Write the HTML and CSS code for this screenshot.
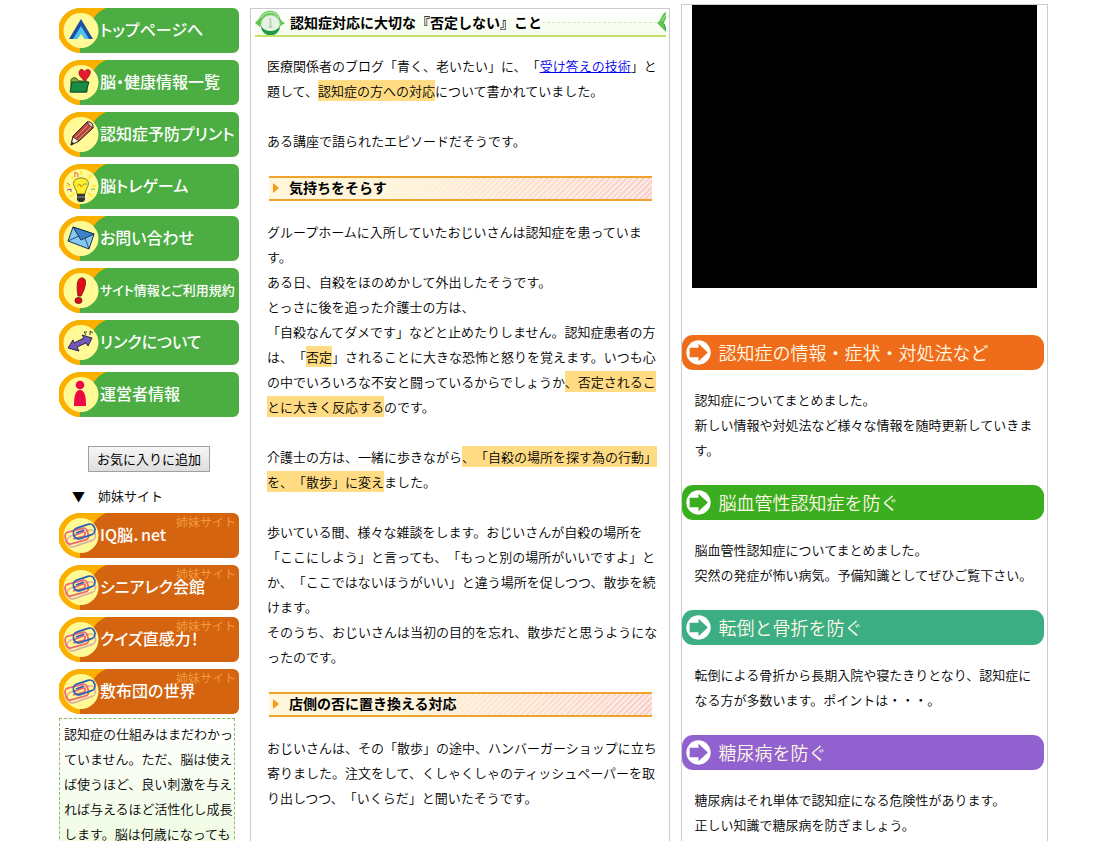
FILE: index.html
```
<!DOCTYPE html>
<html lang="ja">
<head>
<meta charset="utf-8">
<title>認知症対応に大切な『否定しない』こと</title>
<link rel="stylesheet" href="styles.css">
</head>
<body>
<svg class="defs" aria-hidden="true">
  <symbol id="badge" viewBox="0 0 48 45">
    <path d="M22 0H47C40 3 35 8 31 17L21 24V45A22.5 22.5 0 0 1 22 0Z" fill="#fbb000"/>
    <circle cx="22" cy="22.500" r="17.500" fill="#fffa96"/>
  </symbol>
  <symbol id="clips" viewBox="0 0 48 45">
    <g fill="none" stroke-width="1.800" stroke-linejoin="round">
      <rect x="8" y="20" width="29" height="11" rx="5" transform="rotate(-19 22 26)" stroke="#dfb3a4"/>
      <rect x="6" y="17" width="23" height="12" rx="4" transform="rotate(-15 18 22)" stroke="#ee6672"/>
      <path d="M14 23L24 19Q28 20 25 23L14 26" stroke="#ee6672"/>
      <rect x="14" y="13" width="22" height="11" rx="5" transform="rotate(-19 25 18)" stroke="#2c5fb8"/>
      <path d="M25 17L17 20" stroke="#2c5fb8"/>
    </g>
  </symbol>
  <symbol id="arrow" viewBox="0 0 24 24">
    <circle cx="12" cy="12" r="11.700" fill="#fff"/>
    <path d="M3.500 7.500H12V3.500L21 12L12 20.500V16.500H3.500Z" fill="currentColor"/>
  </symbol>
</svg>
<div class="page">
  <aside class="side">
    <nav class="menu">
      <a class="item" href="#"><svg class="icon" viewBox="0 0 48 45"><use href="#badge"/><path d="M22 11L34 31H27L22 23L17 31H10Z" fill="#1d50a5"/><path d="M22 18L30 31H25.500L22 26L18.500 31H14Z" fill="#4cc4ee"/></svg><span>トップページへ</span></a>
      <a class="item" href="#"><svg class="icon" viewBox="0 0 48 45"><use href="#badge"/><path d="M12 32V21Q12 17 17 18L20 21H28V32Z" fill="#83ad42" stroke="#31521e"/><path d="M26 21Q19 16 20 12C21 8 25 9 25 12C28 7 33 10 31 14Q30 17 26 21Z" fill="#e31b2c" stroke="#8c1620" stroke-width=".7"/><path d="M11 32L13 22H30L27 32Z" fill="#188b45" stroke="#134b28"/></svg><span>脳・健康情報一覧</span></a>
      <a class="item" href="#"><svg class="icon" viewBox="0 0 48 45"><use href="#badge"/><path d="M12 33L14 24L28 10Q34 9 34 16L20 29Z" fill="#b6473b" stroke="#34201c"/><path d="M16 26L29 13M19 28L32 15" stroke="#e49078"/><path d="M12 33L14 25L20 29Z" fill="#fff4df" stroke="#34201c" stroke-width=".8"/><path d="M12 33L13 30L15 31Z" fill="#111"/><path d="M28 10Q34 9 34 16L31 14Z" fill="#f7d7cc" stroke="#34201c" stroke-width=".8"/></svg><span>認知症予防プリント</span></a>
      <a class="item" href="#"><svg class="icon" viewBox="0 0 48 45"><use href="#badge"/><path d="M22 7V11M12 12L15 15M33 11L29 15M7 22H12M37 22H33M11 33L15 29M34 33L29 29" stroke="#ffee3a" stroke-width="2"/><path d="M18 30Q18 27 16 24C12 17 17 14 22 14S32 17 28 24Q26 27 26 30Z" fill="#ffee2c" stroke="#695d1d" stroke-width=".8"/><path d="M18 22L21 20L22 23L25 20" fill="none" stroke="#bf891d"/><path d="M25 20H28" stroke="#47b99a"/><path d="M18 30H26V36L24 38H20L18 36Z" fill="#333"/><path d="M18 33H26" stroke="#999"/><path d="M16 13V8L19 10V13M8 19L11 21" fill="none" stroke="#e0603f"/><path d="M8 26L12 25L12 28" fill="none" stroke="#8c41aa"/><path d="M32 26Q35 23 36 26" fill="none" stroke="#58a83b"/></svg><span>脳トレゲーム</span></a>
      <a class="item" href="#"><svg class="icon" viewBox="0 0 48 45"><use href="#badge"/><path d="M14 11L35 18L30 33L9 25Z" fill="#86c8ef" stroke="#173655"/><path d="M9 25L20 20M30 33L26 22" stroke="#173655" stroke-width=".8"/><path d="M14 11L22 24L35 18Z" fill="#3d83cc" stroke="#173655"/></svg><span>お問い合わせ</span></a>
      <a class="item" href="#"><svg class="icon" viewBox="0 0 48 45"><use href="#badge"/><path d="M19 28C18 22 17 11 22 10C28 9 28 17 22 28Z" fill="#e50a18" stroke="#76251a"/><ellipse cx="19.500" cy="32.500" rx="3.500" ry="3" fill="#e50a18" stroke="#76251a"/></svg><span class="long">サイト情報とご利用規約</span></a>
      <a class="item" href="#"><svg class="icon" viewBox="0 0 48 45"><use href="#badge"/><path d="M9 28L14 20L15 23L25 18L23 15L33 18L29 26L27 23L18 27L20 31Z" fill="#7358b7" stroke="#2d2450"/><path d="M27 15L25 12H28M31 15V11L34 13" fill="none" stroke="#3a342d"/></svg><span>リンクについて</span></a>
      <a class="item" href="#"><svg class="icon" viewBox="0 0 48 45"><use href="#badge"/><circle cx="21" cy="13" r="4.300" fill="#ee0945"/><path d="M15 34C15 25 16 18 21 18S27 25 27 34Z" fill="#ee0945"/></svg><span>運営者情報</span></a>
    </nav>
    <button class="favorite" type="button">お気に入りに追加</button>
    <p class="sister-title">▼　姉妹サイト</p>
    <nav class="menu sister">
      <a class="item" href="#"><svg class="icon" viewBox="0 0 48 45"><use href="#badge"/><use href="#clips"/></svg><span>IQ脳．net</span><small class="tag">姉妹サイト</small></a>
      <a class="item" href="#"><svg class="icon" viewBox="0 0 48 45"><use href="#badge"/><use href="#clips"/></svg><span>シニアレク会館</span><small class="tag">姉妹サイト</small></a>
      <a class="item" href="#"><svg class="icon" viewBox="0 0 48 45"><use href="#badge"/><use href="#clips"/></svg><span>クイズ直感力！</span><small class="tag">姉妹サイト</small></a>
      <a class="item" href="#"><svg class="icon" viewBox="0 0 48 45"><use href="#badge"/><use href="#clips"/></svg><span>敷布団の世界</span><small class="tag">姉妹サイト</small></a>
    </nav>
    <p class="note">認知症の仕組みはまだわかっていません。ただ、脳は使えば使うほど、良い刺激を与えれば与えるほど活性化し成長します。脳は何歳になっても</p>
  </aside>

  <main class="article">
    <h1 class="title">
      <svg class="mark" viewBox="0 0 30 26"><path d="M0 14C3 11 4 10 5 8C9 -1 23 0 25 9C26 12 28 13 30 14L24 18L20 12C18 6 11 6 9 12L5 18Z" fill="#62c653"/><path d="M6 9C9 2 20 1 24 9" fill="none" stroke="#a9e59a" stroke-width="1.500"/><circle cx="15.500" cy="15.500" r="9.500" fill="#e6f3e2" stroke="#b2cfab"/><path d="M6 17A9.500 9.500 0 0 0 25 17Q22 22 15.500 22T6 17Z" fill="#1e9a43"/><path d="M14 10H16M15.500 10V18M13.500 18H17.500" fill="none" stroke="#b5cbaf" stroke-width="1.500"/></svg>
      <span>認知症対応に大切な『否定しない』こと</span>
      <i class="dots"></i>
      <svg class="mark-cut" viewBox="0 0 9 26"><path d="M0 14Q3 12 4 9Q6 4 9 3V9Q7 13 7 15L9 20V23L4 18Z" fill="#62c653"/><path d="M5 12Q6 8 9 6" fill="none" stroke="#a9e59a"/><path d="M7 15L9 21" stroke="#1e9a43"/></svg>
    </h1>
    <p>医療関係者のブログ「青く、老いたい」に、「<a href="#">受け答えの技術</a>」と題して、<mark>認知症の方への対応</mark>について書かれていました。<br><br>ある講座で語られたエピソードだそうです。</p>
    <h2 class="sub">気持ちをそらす</h2>
    <p>グループホームに入所していたおじいさんは認知症を患っています。<br>ある日、自殺をほのめかして外出したそうです。<br>とっさに後を追った介護士の方は、<br>「自殺なんてダメです」などと止めたりしません。認知症患者の方は、「<mark>否定</mark>」されることに大きな恐怖と怒りを覚えます。いつも心の中でいろいろな不安と闘っているからでしょうか<mark>、否定されることに大きく反応する</mark>のです。<br><br>介護士の方は、一緒に歩きながら<mark>、「自殺の場所を探す為の行動」を、「散歩」に変え</mark>ました。<br><br>歩いている間、様々な雑談をします。おじいさんが自殺の場所を「ここにしよう」と言っても、「もっと別の場所がいいですよ」とか、「ここではないほうがいい」と違う場所を促しつつ、散歩を続けます。<br>そのうち、おじいさんは当初の目的を忘れ、散歩だと思うようになったのです。</p>
    <h2 class="sub">店側の否に置き換える対応</h2>
    <p>おじいさんは、その「散歩」の途中、ハンバーガーショップに立ち寄りました。注文をして、くしゃくしゃのティッシュペーパーを取り出しつつ、「いくらだ」と聞いたそうです。</p>
  </main>

  <aside class="topics">
    <div class="video"></div>
    <h2 class="banner orange"><svg viewBox="0 0 24 24"><use href="#arrow"/></svg>認知症の情報・症状・対処法など</h2>
    <p>認知症についてまとめました。<br>新しい情報や対処法など様々な情報を随時更新していきます。</p>
    <h2 class="banner green"><svg viewBox="0 0 24 24"><use href="#arrow"/></svg>脳血管性認知症を防ぐ</h2>
    <p>脳血管性認知症についてまとめました。<br>突然の発症が怖い病気。予備知識としてぜひご覧下さい。</p>
    <h2 class="banner teal"><svg viewBox="0 0 24 24"><use href="#arrow"/></svg>転倒と骨折を防ぐ</h2>
    <p>転倒による骨折から長期入院や寝たきりとなり、認知症になる方が多数います。ポイントは・・・。</p>
    <h2 class="banner purple"><svg viewBox="0 0 24 24"><use href="#arrow"/></svg>糖尿病を防ぐ</h2>
    <p>糖尿病はそれ単体で認知症になる危険性があります。<br>正しい知識で糖尿病を防ぎましょう。</p>
  </aside>
</div>
</body>
</html>
```

FILE: styles.css
```
* { box-sizing: border-box; }

body {
  margin: 0;
  background: #fff;
  color: #000;
  font-family: "Noto Sans CJK JP", sans-serif;
  font-size: 13px;
  font-weight: 350;
  line-height: 25px;
  text-spacing-trim: space-all;
}

h1, h2, p { margin: 0; }

.defs { position: absolute; width: 0; height: 0; }

.page {
  display: grid;
  grid-template-columns: 180px minmax(0, 419fr) minmax(0, 367fr);
  column-gap: 11px;
  height: 100vh;
  padding: 0 68px 0 59px;
  overflow: hidden;
}

.side {
  display: flex;
  flex-direction: column;
  padding-top: 8px;
}

.menu {
  display: grid;
  grid-template-columns: minmax(0, 1fr);
  gap: 7px;
}

.item {
  position: relative;
  display: flex;
  align-items: center;
  height: 45px;
  padding: 0 0 2px 41px;
  border-radius: 22px 6px 6px 22px;
  background: #4cad43;
  color: #fff;
  font-size: 16px;
  font-weight: 500;
  font-feature-settings: "palt";
  text-decoration: none;
  white-space: nowrap;
}

.icon {
  position: absolute;
  left: 0;
  top: 0;
  width: 48px;
  height: 45px;
}

.long { font-size: 13px; }

.sister .item { background: #d4640f; }

.tag {
  position: absolute;
  top: 0;
  right: 3px;
  color: #f39a3c;
  font-size: 12px;
  font-weight: 400;
  line-height: 18px;
  font-feature-settings: normal;
}

.favorite {
  align-self: center;
  height: 26px;
  margin: 29px 0 11px;
  padding: 0 8px;
  border: 1px solid #a0a0a0;
  border-radius: 0;
  background: linear-gradient(#f6f6f6, #dedede);
  color: #000;
  font: 13px/22px "Noto Sans CJK JP", sans-serif;
}

.sister-title { margin-bottom: 5px; padding-left: 13px; }

.note {
  margin: 4px 4px 0 0;
  padding: 2px 0 2px 4px;
  border: 1px dashed #8fb868;
  background: linear-gradient(#fff, #effbe2);
}

.article {
  margin-top: 8px;
  border: 1px solid #ccc;
  border-bottom: 0;
}

.article p { padding: 0 10px 0 16px; }

.title {
  display: flex;
  align-items: center;
  height: 28px;
  margin: 0 3px 16px 4px;
  border-bottom: 2px solid #c3e165;
  background: linear-gradient(#fff, #f5fdec);
  font-size: 14px;
}

.mark { width: 30px; height: 26px; margin-right: 5px; }
.mark-cut { width: 9px; height: 26px; }

.dots {
  flex: 1;
  border-top: 1px dashed #d5e8c2;
}

.article a { color: #00e; }

mark { padding: 1px 0; background: #ffdb83; color: inherit; }

.sub {
  position: relative;
  height: 25px;
  margin: 23px 17px 18px 18px;
  padding-left: 20px;
  border: solid #efa32c;
  border-width: 2px 0;
  background:
    linear-gradient(to right, #fff6dc 30%, rgba(255, 246, 220, 0)),
    repeating-linear-gradient(135deg, #f9cfc8 0 2px, #fdeae5 2px 4px);
  font-size: 14px;
  line-height: 19px;
}

.sub::before {
  content: "";
  position: absolute;
  left: 4px;
  top: 5px;
  border: solid transparent;
  border-width: 5px 0 5px 6px;
  border-left-color: #f39b12;
}

.topics {
  margin-top: 4px;
  border: 1px solid #ccc;
  border-bottom: 0;
}

.topics p { padding: 0 12px 0 13px; }

.video {
  height: 283px;
  margin: 0 10px 47px;
  background: #000;
}

.banner {
  display: flex;
  align-items: center;
  gap: 8px;
  height: 35px;
  margin: 23px 3px 17px 0;
  padding-left: 4px;
  border-radius: 11px;
  color: #fff8e6;
  font-size: 18px;
  font-weight: 350;
}

.banner svg { width: 25px; height: 25px; }

.orange { background: #ef6d1a; }
.green { background: #3bae1f; }
.teal { background: #3bae84; }
.purple { background: #9162cf; }

.orange svg { color: #ef6d1a; }
.green svg { color: #3bae1f; }
.teal svg { color: #3bae84; }
.purple svg { color: #9162cf; }
```
